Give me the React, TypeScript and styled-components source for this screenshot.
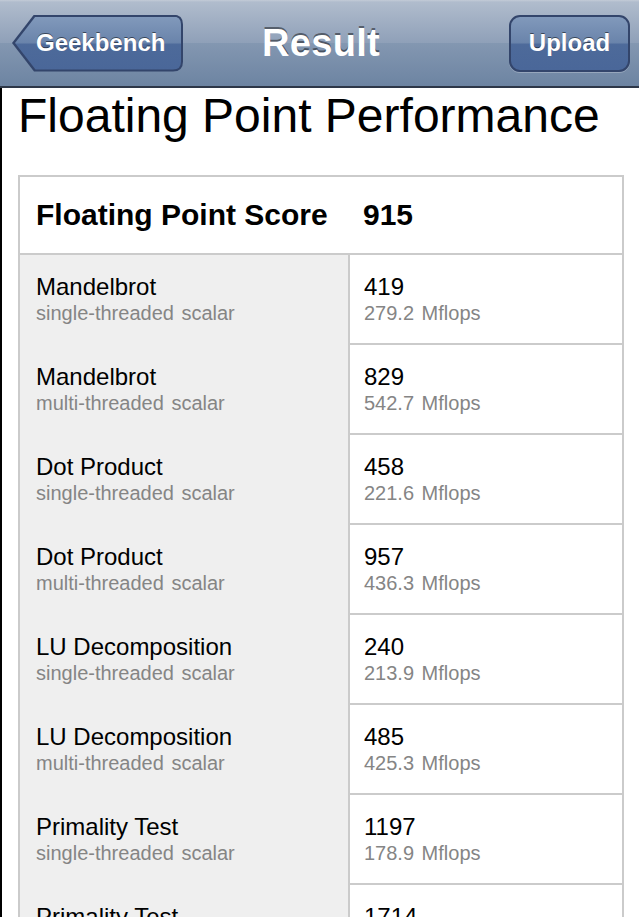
import React from "react";
import styled, { createGlobalStyle } from "styled-components";

const GlobalStyle = createGlobalStyle`
  html, body {
    margin: 0;
    padding: 0;
    background: #ffffff;
    overflow: hidden;
  }
  body {
    font-family: "Liberation Sans", Arial, Helvetica, sans-serif;
    -webkit-font-smoothing: antialiased;
  }
`;

const NavBar = styled.header`
  height: 86px;
  display: grid;
  grid-template-columns: 1fr auto 1fr;
  align-items: center;
  padding: 0 9px 0 12px;
  background: linear-gradient(
    #c3cbd7 0px,
    #b0bccd 2px,
    #8fa0b8 50%,
    #8397b1 50%,
    #6d84a2 100%
  );
  border-bottom: 2px solid #2d3748;
`;

const NavTitle = styled.h1`
  margin: 0;
  font-size: 38px;
  font-weight: 700;
  color: #ffffff;
  text-shadow: 0 -2px 0 rgba(0, 0, 0, 0.45);
  letter-spacing: 0.3px;
`;

const buttonFill = `linear-gradient(
  #8199bb 0%,
  #6a84ab 48%,
  #4d6a9a 52%,
  #4a6799 100%
)`;

const BackOuter = styled.div`
  justify-self: start;
  width: 171px;
  height: 57px;
  padding: 2px 2px 2px 3px;
  box-sizing: border-box;
  background: #33456b;
  clip-path: path("M22 0 H161 Q171 0 171 10 V47 Q171 57 161 57 H22 L0 28.5 Z");
`;

const BackInner = styled.div`
  width: 166px;
  height: 53px;
  display: flex;
  align-items: center;
  padding-left: 21px;
  box-sizing: border-box;
  background: ${buttonFill};
  clip-path: path("M20.5 0 H158 Q166 0 166 8 V45 Q166 53 158 53 H20.5 L0 26.5 Z");
`;

const NavButton = styled.div`
  justify-self: end;
  width: 121px;
  height: 57px;
  box-sizing: border-box;
  border: 2px solid #33456b;
  border-radius: 11px;
  background: ${buttonFill};
  display: flex;
  align-items: center;
  justify-content: center;
  box-shadow: 0 1px 0 rgba(255, 255, 255, 0.25);
`;

const ButtonLabel = styled.span<{ $pad?: number }>`
  font-size: 24px;
  font-weight: 700;
  color: #ffffff;
  text-shadow: 0 -1px 0 rgba(0, 0, 0, 0.5);
  padding-left: ${(p) => p.$pad ?? 0}px;
`;

const Content = styled.main`
  border-left: 2px solid #000000;
  min-height: 900px;
  padding: 0 15px 0 16px;
`;

const PageTitle = styled.h2`
  margin: 0;
  font-size: 48px;
  line-height: 56px;
  font-weight: 400;
  color: #000000;
`;

const Table = styled.section`
  margin-top: 31px;
  border: 2px solid #cbcbcb;
  border-bottom: none;
`;

const ScoreRow = styled.div`
  display: grid;
  grid-template-columns: 328px 1fr;
  height: 76px;
  align-items: center;
  border-bottom: 2px solid #cbcbcb;
  font-size: 30px;
  font-weight: 700;
  color: #000000;
`;

const ScoreLabel = styled.div`
  padding-left: 16px;
`;

const ScoreValue = styled.div`
  padding-left: 15px;
`;

const Row = styled.div`
  display: grid;
  grid-template-columns: 328px 1fr;
`;

const NameCell = styled.div`
  background: #efefef;
  height: 90px;
  box-sizing: border-box;
  padding: 18px 0 0 16px;
`;

const ValueCell = styled.div`
  height: 90px;
  box-sizing: border-box;
  padding: 18px 0 0 14px;
  border-left: 2px solid #cbcbcb;
  border-bottom: 2px solid #cbcbcb;
`;

const MainText = styled.div`
  font-size: 24px;
  line-height: 28px;
  color: #000000;
`;

const SubText = styled.div`
  font-size: 20px;
  line-height: 24px;
  color: #858585;
  word-spacing: 2px;
`;

type Result = { name: string; kind: string; score: number; rate: string };

const results: Result[] = [
  { name: "Mandelbrot", kind: "single-threaded scalar", score: 419, rate: "279.2 Mflops" },
  { name: "Mandelbrot", kind: "multi-threaded scalar", score: 829, rate: "542.7 Mflops" },
  { name: "Dot Product", kind: "single-threaded scalar", score: 458, rate: "221.6 Mflops" },
  { name: "Dot Product", kind: "multi-threaded scalar", score: 957, rate: "436.3 Mflops" },
  { name: "LU Decomposition", kind: "single-threaded scalar", score: 240, rate: "213.9 Mflops" },
  { name: "LU Decomposition", kind: "multi-threaded scalar", score: 485, rate: "425.3 Mflops" },
  { name: "Primality Test", kind: "single-threaded scalar", score: 1197, rate: "178.9 Mflops" },
  { name: "Primality Test", kind: "multi-threaded scalar", score: 1714, rate: "256.1 Mflops" },
];

const App: React.FC = () => {
  return (
    <>
      <GlobalStyle />
      <NavBar>
        <BackOuter>
          <BackInner>
            <ButtonLabel>Geekbench</ButtonLabel>
          </BackInner>
        </BackOuter>
        <NavTitle>Result</NavTitle>
        <NavButton>
          <ButtonLabel>Upload</ButtonLabel>
        </NavButton>
      </NavBar>

      <Content>
        <PageTitle>Floating Point Performance</PageTitle>

        <Table>
          <ScoreRow>
            <ScoreLabel>Floating Point Score</ScoreLabel>
            <ScoreValue>915</ScoreValue>
          </ScoreRow>

          {results.map((r, i) => (
            <Row key={i}>
              <NameCell>
                <MainText>{r.name}</MainText>
                <SubText>{r.kind}</SubText>
              </NameCell>
              <ValueCell>
                <MainText>{r.score}</MainText>
                <SubText>{r.rate}</SubText>
              </ValueCell>
            </Row>
          ))}
        </Table>
      </Content>
    </>
  );
};

export default App;
